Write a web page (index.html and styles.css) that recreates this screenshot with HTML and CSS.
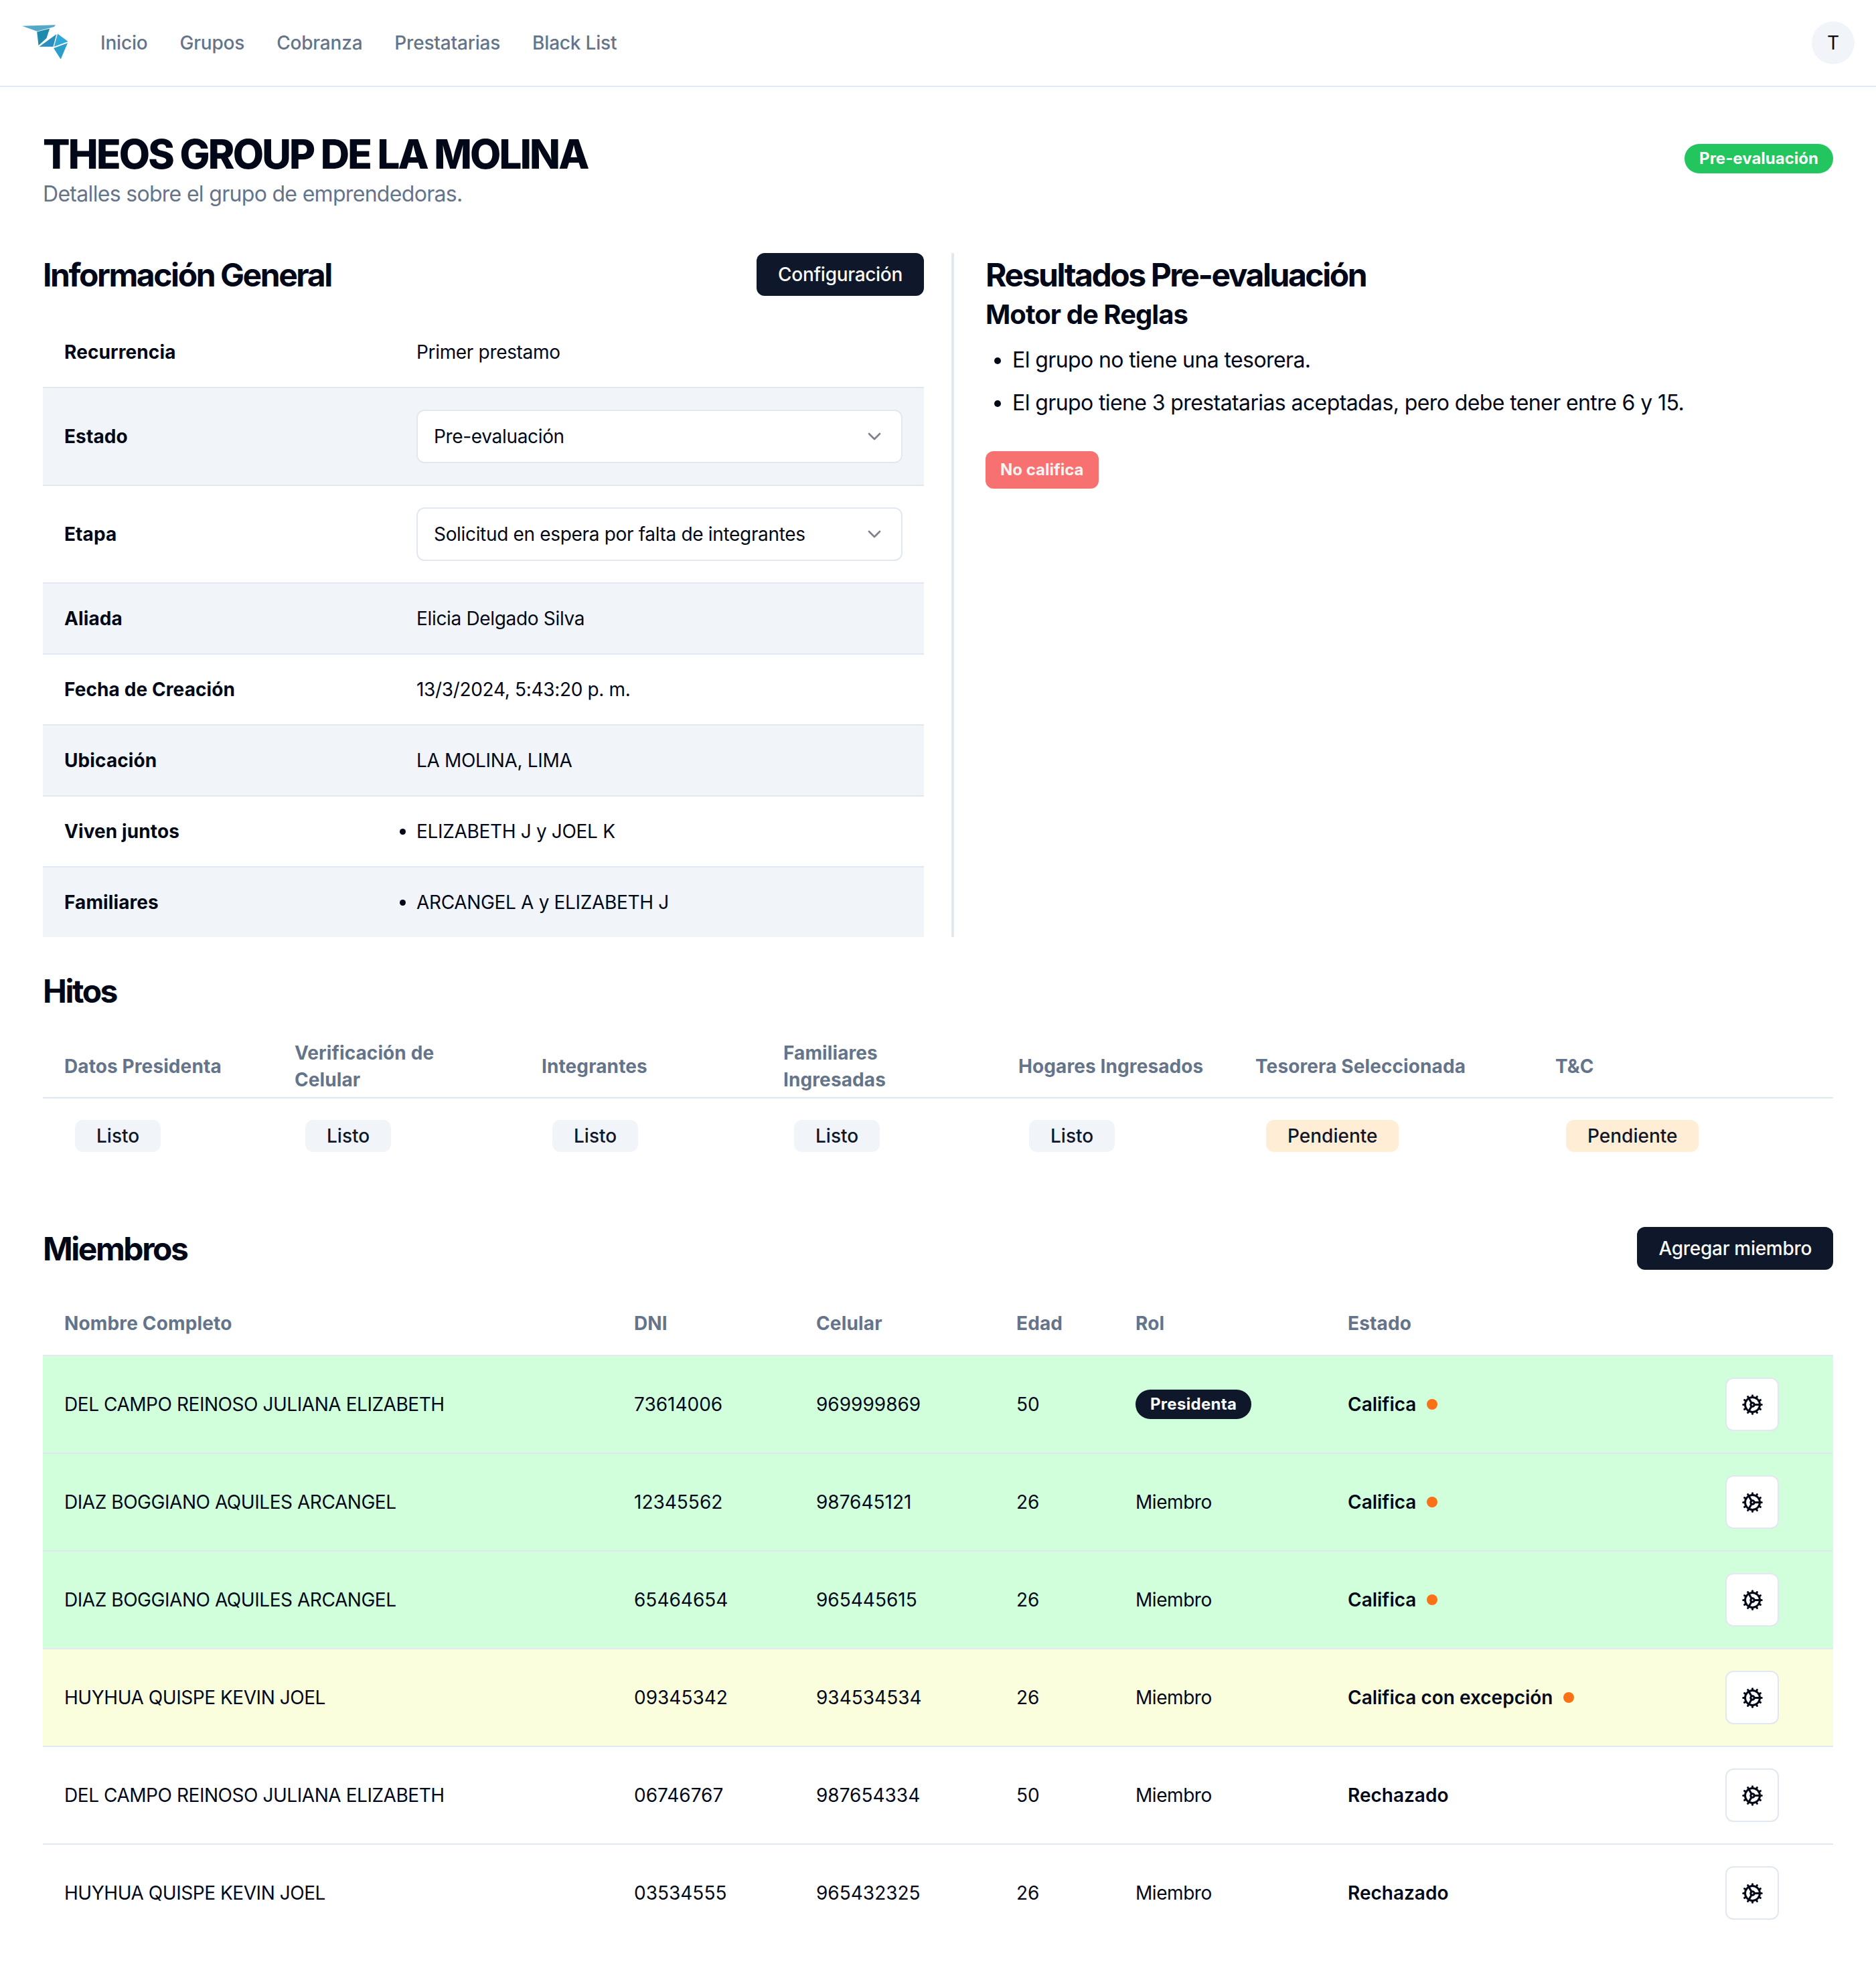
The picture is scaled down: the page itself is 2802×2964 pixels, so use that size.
FILE: index.html
```html
<!DOCTYPE html>
<html lang="es">
<head>
<meta charset="utf-8">
<title>THEOS GROUP DE LA MOLINA</title>
<link rel="stylesheet" href="styles.css">
</head>
<body>
<svg class="sprite" width="0" height="0" aria-hidden="true">
  <symbol id="cog" viewBox="0 0 24 24"><path d="M12 20a8 8 0 1 0 0-16 8 8 0 0 0 0 16Z"/><path d="M12 14a2 2 0 1 0 0-4 2 2 0 0 0 0 4Z"/><path d="M12 2v2"/><path d="M12 22v-2"/><path d="m17 20.66-1-1.73"/><path d="M11 10.27 7 3.34"/><path d="m20.66 17-1.73-1"/><path d="m3.34 7 1.73 1"/><path d="M14 12h8"/><path d="M2 12h2"/><path d="m20.66 7-1.73 1"/><path d="m3.34 17 1.73-1"/><path d="m17 3.34-1 1.73"/><path d="m11 13.73-4 6.93"/></symbol>
  <symbol id="chev" viewBox="0 0 24 24"><path d="m6 9 6 6 6-6"/></symbol>
</svg>
<header class="topbar">
  <svg class="logo" viewBox="38 55 208 156" aria-label="Logo">
    <polygon points="38,60 188,55 183,64 105,84" fill="#55a9c8"/>
    <polygon points="105,86 162,72 148,115 112,148" fill="#1f8bab"/>
    <polygon points="115,153 193,97 178,153" fill="#2a8fc0"/>
    <polygon points="198,95 245,130 182,153" fill="#30a9d9"/>
    <polygon points="180,160 243,137 212,210" fill="#2b9ecb"/>
  </svg>
  <nav class="nav">
    <a>Inicio</a><a>Grupos</a><a>Cobranza</a><a>Prestatarias</a><a>Black List</a>
  </nav>
  <div class="avatar">T</div>
</header>
<main class="page">
  <section class="title-row">
    <div>
      <h1>THEOS GROUP DE LA MOLINA</h1>
      <p class="subtitle">Detalles sobre el grupo de emprendedoras.</p>
    </div>
    <span class="pill pill-green">Pre-evaluación</span>
  </section>

  <section class="columns">
    <div class="col-left">
      <div class="head-row">
        <h2>Información General</h2>
        <button class="btn">Configuración</button>
      </div>
      <table class="info">
        <tr><th>Recurrencia</th><td>Primer prestamo</td></tr>
        <tr><th>Estado</th><td><div class="select"><span>Pre-evaluación</span><svg class="chev"><use href="#chev"/></svg></div></td></tr>
        <tr><th>Etapa</th><td><div class="select"><span>Solicitud en espera por falta de integrantes</span><svg class="chev"><use href="#chev"/></svg></div></td></tr>
        <tr><th>Aliada</th><td>Elicia Delgado Silva</td></tr>
        <tr><th>Fecha de Creación</th><td>13/3/2024, 5:43:20 p. m.</td></tr>
        <tr><th>Ubicación</th><td>LA MOLINA, LIMA</td></tr>
        <tr><th>Viven juntos</th><td><ul class="inline-list"><li>ELIZABETH J y JOEL K</li></ul></td></tr>
        <tr><th>Familiares</th><td><ul class="inline-list"><li>ARCANGEL A y ELIZABETH J</li></ul></td></tr>
      </table>
    </div>
    <div class="col-right">
      <h2>Resultados Pre-evaluación</h2>
      <h3>Motor de Reglas</h3>
      <ul class="rules">
        <li>El grupo no tiene una tesorera.</li>
        <li>El grupo tiene 3 prestatarias aceptadas, pero debe tener entre 6 y 15.</li>
      </ul>
      <span class="tag-red">No califica</span>
    </div>
  </section>

  <section class="hitos">
    <h2>Hitos</h2>
    <table class="milestones">
      <thead>
        <tr><th>Datos Presidenta</th><th>Verificación de Celular</th><th>Integrantes</th><th>Familiares Ingresadas</th><th>Hogares Ingresados</th><th>Tesorera Seleccionada</th><th>T&amp;C</th></tr>
      </thead>
      <tbody>
        <tr>
          <td><span class="chip">Listo</span></td>
          <td><span class="chip">Listo</span></td>
          <td><span class="chip">Listo</span></td>
          <td><span class="chip">Listo</span></td>
          <td><span class="chip">Listo</span></td>
          <td><span class="chip chip-warn">Pendiente</span></td>
          <td><span class="chip chip-warn">Pendiente</span></td>
        </tr>
      </tbody>
    </table>
  </section>

  <section class="miembros">
    <div class="head-row">
      <h2>Miembros</h2>
      <button class="btn">Agregar miembro</button>
    </div>
    <table class="members">
      <thead>
        <tr><th>Nombre Completo</th><th>DNI</th><th>Celular</th><th>Edad</th><th>Rol</th><th>Estado</th><th></th></tr>
      </thead>
      <tbody>
        <tr class="ok"><td>DEL CAMPO REINOSO JULIANA ELIZABETH</td><td>73614006</td><td>969999869</td><td>50</td><td><span class="pill pill-dark">Presidenta</span></td><td><div class="status">Califica<i class="dot"></i></div></td><td><button class="gear"><svg class="cog"><use href="#cog"/></svg></button></td></tr>
        <tr class="ok"><td>DIAZ BOGGIANO AQUILES ARCANGEL</td><td>12345562</td><td>987645121</td><td>26</td><td>Miembro</td><td><div class="status">Califica<i class="dot"></i></div></td><td><button class="gear"><svg class="cog"><use href="#cog"/></svg></button></td></tr>
        <tr class="ok"><td>DIAZ BOGGIANO AQUILES ARCANGEL</td><td>65464654</td><td>965445615</td><td>26</td><td>Miembro</td><td><div class="status">Califica<i class="dot"></i></div></td><td><button class="gear"><svg class="cog"><use href="#cog"/></svg></button></td></tr>
        <tr class="warn"><td>HUYHUA QUISPE KEVIN JOEL</td><td>09345342</td><td>934534534</td><td>26</td><td>Miembro</td><td><div class="status">Califica con excepción<i class="dot"></i></div></td><td><button class="gear"><svg class="cog"><use href="#cog"/></svg></button></td></tr>
        <tr><td>DEL CAMPO REINOSO JULIANA ELIZABETH</td><td>06746767</td><td>987654334</td><td>50</td><td>Miembro</td><td><div class="status">Rechazado</div></td><td><button class="gear"><svg class="cog"><use href="#cog"/></svg></button></td></tr>
        <tr><td>HUYHUA QUISPE KEVIN JOEL</td><td>03534555</td><td>965432325</td><td>26</td><td>Miembro</td><td><div class="status">Rechazado</div></td><td><button class="gear"><svg class="cog"><use href="#cog"/></svg></button></td></tr>
      </tbody>
    </table>
  </section>
</main>
</body>
</html>
```
FILE: styles.css
```css
* { box-sizing: border-box; }
html, body { margin: 0; padding: 0; background: #fff; }
body { font-family: Inter, "Liberation Sans", sans-serif; color: #020817; font-size: 28px; line-height: 40px; }
.sprite { position: absolute; }
h1, h2, h3, p, ul { margin: 0; padding: 0; }

.topbar { height: 130px; border-bottom: 2px solid #e2e8f0; display: flex; align-items: center; padding: 0 32px 0 33px; }
.logo { width: 69px; height: 52px; margin-right: 48px; margin-top: -2px; }
.nav { display: flex; gap: 48px; flex: 1; font-weight: 500; color: #64748b; letter-spacing: -0.2px; }
.avatar { width: 64px; height: 64px; border-radius: 50%; background: #f1f5f9; display: flex; align-items: center; justify-content: center; }

.page { padding: 64px 64px 0; }
.title-row { display: flex; justify-content: space-between; align-items: flex-start; }
h1 { font-size: 60px; line-height: 72px; font-weight: 800; letter-spacing: -2.8px; }
.subtitle { font-size: 32px; line-height: 48px; color: #64748b; letter-spacing: -0.69px; }
.pill { display: inline-flex; align-items: center; height: 44px; border-radius: 22px; padding: 0 22px; font-size: 24px; font-weight: 700; color: #f8fafc; }
.pill-green { background: #22c55e; margin-top: 21px; }
.pill-dark { background: #0f172a; letter-spacing: 0.3px; }

.columns { display: flex; margin-top: 64px; }
.col-left { width: 1361px; padding-right: 41px; border-right: 4px solid #e2e8f0; }
.col-right { flex: 1; padding-left: 47px; }
.head-row { display: flex; justify-content: space-between; align-items: center; height: 64px; }
h2 { font-size: 48px; line-height: 62px; padding-top: 2px; font-weight: 700; letter-spacing: -2.45px; }
h3 { font-size: 40px; line-height: 56px; font-weight: 700; letter-spacing: -0.95px; }
.btn { height: 64px; padding: 0 32px; border: 0; border-radius: 12px; background: #0f172a; color: #f8fafc; font: 500 28px/40px Inter, sans-serif; letter-spacing: -0.3px; }

table { border-collapse: collapse; width: 100%; table-layout: fixed; }
.info { margin-top: 32px; }
.info th { width: 526px; text-align: left; font-weight: 700; letter-spacing: 0.1px; padding: 32px; }
.info td { padding: 32px; letter-spacing: -0.33px; }
.info tr { border-bottom: 2px solid #e2e8f0; }
.info tr:last-child { border-bottom: 0; }
.info tr:nth-child(even) { background: #f1f5f9; }
.select { height: 80px; border: 2px solid #e2e8f0; border-radius: 12px; background: #fff; display: flex; align-items: center; justify-content: space-between; padding: 0 24px; }
.chev { width: 32px; height: 32px; fill: none; stroke: #020817; stroke-width: 2; stroke-linecap: round; stroke-linejoin: round; opacity: .5; }
.inline-list { list-style: disc; }

.rules { margin-top: 16px; padding-left: 40px; font-size: 32px; line-height: 48px; letter-spacing: -0.6px; display: flex; flex-direction: column; gap: 16px; }
.tag-red { display: inline-flex; align-items: center; height: 56px; margin-top: 48px; padding: 0 22px; border-radius: 12px; background: #f87171; color: #fef2f2; font-size: 24px; font-weight: 700; }

.hitos { margin-top: 48px; }
.milestones { margin-top: 31px; }
.milestones th { text-align: left; padding: 10px 32px 6px; color: #64748b; font-weight: 700; letter-spacing: 0.1px; }
.milestones thead tr { border-bottom: 2px solid #e2e8f0; }
.milestones td { padding: 32px; }
.milestones th:nth-child(1) { width: 344px; }
.milestones th:nth-child(2) { width: 369px; }
.milestones th:nth-child(3) { width: 361px; }
.milestones th:nth-child(4) { width: 351px; }
.milestones th:nth-child(5) { width: 354px; }
.milestones th:nth-child(6) { width: 448px; }
.chip { display: inline-flex; align-items: center; height: 48px; margin-left: 16px; padding: 0 32px; border-radius: 12px; background: #f1f5f9; font-weight: 500; color: #0f172a; }
.chip-warn { background: #ffedd5; }

.miembros { margin-top: 80px; }
.members { margin-top: 32px; }
.members th { height: 96px; text-align: left; padding: 0 32px; color: #64748b; font-weight: 700; letter-spacing: 0.15px; }
.members td { padding: 32px; white-space: nowrap; letter-spacing: -0.45px; }
.members td:nth-child(2), .members td:nth-child(3), .members td:nth-child(4) { letter-spacing: 0; }
.members tr { border-bottom: 2px solid #e2e8f0; }
.members tbody tr:last-child { border-bottom: 0; }
.members th:nth-child(1) { width: 851px; }
.members th:nth-child(2) { width: 272px; }
.members th:nth-child(3) { width: 299px; }
.members th:nth-child(4) { width: 178px; }
.members th:nth-child(5) { width: 317px; }
.members th:nth-child(6) { width: 564px; }
.members .ok { background: #d1ffdb; }
.members .warn { background: #fafedc; }
.status { display: flex; align-items: center; gap: 16px; font-weight: 600; letter-spacing: 0; }
.dot { width: 16px; height: 16px; border-radius: 50%; background: #f97316; }
.gear { width: 80px; height: 80px; display: flex; align-items: center; justify-content: center; padding: 0; border: 2px solid #e2e8f0; border-radius: 12px; background: #fff; }
.cog { width: 33px; height: 33px; fill: none; stroke: #020817; stroke-width: 2.2; stroke-linecap: round; stroke-linejoin: round; }
```
